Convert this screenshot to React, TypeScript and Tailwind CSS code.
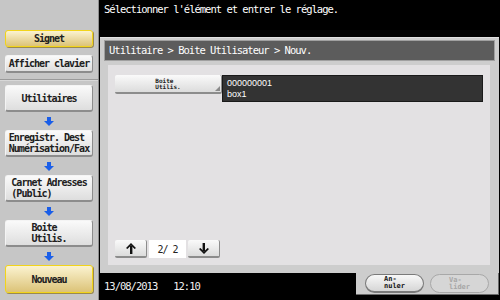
import React from "react";

const mono = "font-['DejaVu_Sans_Mono',monospace] tracking-[-1px]";

function BlueArrow() {
  return (
    <div className="h-[18px] flex items-center justify-center">
      <svg width="10" height="9" viewBox="0 0 10 9">
        <rect x="3" y="0" width="4" height="4" fill="#1a5ee8" />
        <polygon points="0,4 10,4 5,9" fill="#1a5ee8" />
      </svg>
    </div>
  );
}

function SideButton({ children, yellow, h = "h-[27px]" }: { children: React.ReactNode; yellow?: boolean; h?: string }) {
  const look = yellow
    ? "bg-gradient-to-b from-[#fbf3d0] to-[#dcc377] border border-[#f2d41a] shadow-[1px_1px_0_#9a8a50]"
    : "bg-gradient-to-b from-[#fafafa] to-[#dedede] border-b-2 border-r border-[#8c8c8c] border-t border-l border-t-[#f4f4f4] border-l-[#f4f4f4]";
  return (
    <div className={`${h} ${look} rounded-[3px] flex items-center justify-center text-[#202020] font-bold text-[10px] leading-[11px] ${mono}`}>
      {children}
    </div>
  );
}

function PageArrow({ up }: { up?: boolean }) {
  return (
    <div className="w-[32px] h-[18px] rounded-[2px] bg-gradient-to-b from-[#fafafa] to-[#dcdcdc] border-b-2 border-r border-[#8c8c8c] flex items-center justify-center">
      <svg width="10" height="11" viewBox="0 0 10 11" className={up ? "" : "rotate-180"}>
        <rect x="4" y="3" width="2.4" height="8" fill="#111" />
        <polygon points="0,5 5,0 10,5 8.6,6 5,2.6 1.4,6" fill="#111" />
      </svg>
    </div>
  );
}

export default function App() {
  return (
    <div className="w-[500px] h-[300px] flex overflow-hidden bg-black">
      {/* left rail */}
      <div className="w-[99px] h-full bg-[#c6c6c6] border-r border-[#8e8e8e] flex flex-col">
        <div className="px-[5px] pt-[30px]">
          <SideButton yellow h="h-[17px]">Signet</SideButton>
          <div className="mt-[8px]">
            <SideButton h="h-[18px]">Afficher clavier</SideButton>
          </div>
        </div>
        <div className="mt-[6px] h-[2px] border-t border-[#9a9a9a] bg-[#d8d8d8]" />
        <div className="px-[5px] pt-[4px]">
          <SideButton>Utilitaires</SideButton>
          <BlueArrow />
          <SideButton>
            <span className="inline-block text-left">Enregistr. Dest<br />Numérisation/Fax</span>
          </SideButton>
          <BlueArrow />
          <SideButton>
            <span className="inline-block text-left">Carnet Adresses<br />(Public)</span>
          </SideButton>
          <BlueArrow />
          <SideButton>
            <span className="inline-block text-left">Boite<br />Utilis.</span>
          </SideButton>
          <BlueArrow />
          <SideButton yellow h="h-[28px]">Nouveau</SideButton>
        </div>
      </div>

      {/* right side */}
      <div className="flex-1 flex flex-col">
        <div className={`h-[37px] pl-[5px] pt-[3px] text-white text-[10.5px] leading-[12px] ${mono} tracking-[-1.3px]`}>
          Sélectionner l'élément et entrer le réglage.
        </div>

        <div className="ml-[1px] mr-[1px] h-[236px] bg-[#cdcdcd] border-t border-[#e0e0e0] pt-[2px] px-[4px] flex flex-col">
          <div className={`h-[21px] bg-[#5c5c5c] border border-[#a0a0a0] flex items-center pl-[4px] text-white text-[10.5px] ${mono} tracking-[-1.3px]`}>
            Utilitaire &gt; Boite Utilisateur &gt; Nouv.
          </div>
          <div className="mt-[4px] ml-[4px] mr-[5px] h-[200px] bg-[#e3e1e3] flex flex-col px-[7px] pt-[10px]">
            <div className="flex items-start">
              <div className="relative w-[107px] h-[19px] rounded-[2px] bg-gradient-to-b from-[#fafafa] to-[#dcdcdc] border-b-2 border-r border-[#8c8c8c] flex items-center justify-center">
                <span className={`inline-block text-left text-[6px] leading-[6px] font-bold text-[#222] ${mono} tracking-[0px]`}>
                  Boite<br />Utilis.
                </span>
                <span className="absolute right-[1px] bottom-[1px] w-0 h-0 border-l-[5px] border-l-transparent border-b-[5px] border-b-[#8a8a8a]" />
              </div>
              <div className="flex-1 h-[27px] bg-[#333333] border border-[#1a1a1a] pl-[4px] pt-[2px] text-white text-[9px] leading-[11px] font-['Liberation_Sans',sans-serif]">
                000000001<br />box1
              </div>
            </div>
            <div className="mt-auto mb-[7px] flex items-center gap-[2px]">
              <PageArrow up />
              <div className={`w-[37px] h-[18px] bg-white flex items-center justify-center text-[10px] text-[#222] ${mono} whitespace-pre`}>
                2/ 2
              </div>
              <PageArrow />
            </div>
          </div>
        </div>

        <div className="flex flex-1">
          <div className={`flex-1 flex items-center pl-[5px] text-[#f0f0f0] text-[10.5px] ${mono} tracking-[-1.3px] whitespace-pre`}>
            13/08/2013   12:10
          </div>
          <div className="w-[143px] mr-[1px] mb-[5px] bg-[#cdcdcd] border-b border-r border-[#6a6a6a] flex items-start gap-[6px] pl-[9px] pt-[1px]">
            <div className="w-[59px] h-[19px] rounded-full bg-gradient-to-b from-[#f8f8f8] to-[#d6d6d6] border border-[#7a7a7a] border-b-2 flex items-center justify-center">
              <span className={`inline-block text-left text-[7px] leading-[7px] font-bold text-[#111] ${mono} tracking-[0px]`}>
                An-<br />nuler
              </span>
            </div>
            <div className="w-[59px] h-[19px] rounded-full bg-[#d6d6d6] border border-[#a8a8a8] flex items-center justify-center">
              <span className={`inline-block text-left text-[7px] leading-[7px] font-bold text-[#a6a6a6] ${mono} tracking-[0px]`}>
                Va-<br />lider
              </span>
            </div>
          </div>
        </div>
      </div>
    </div>
  );
}
